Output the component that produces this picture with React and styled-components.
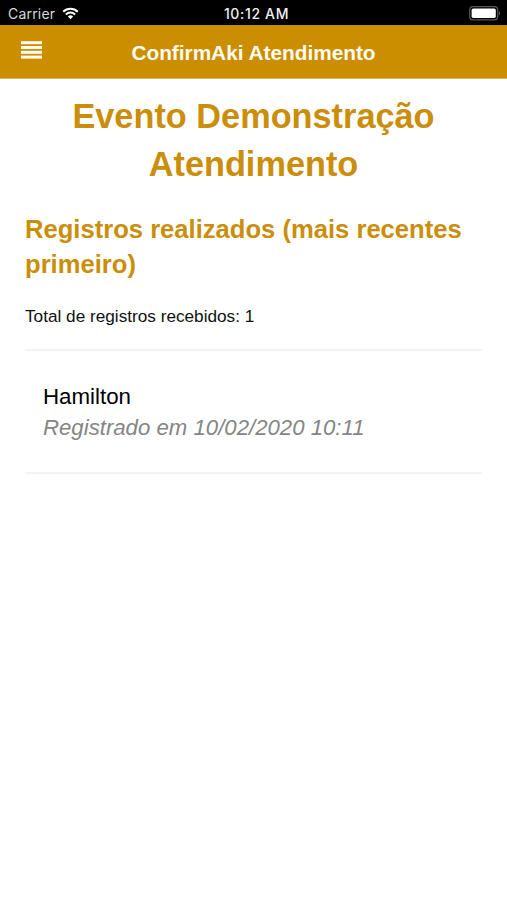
import React from "react";
import styled, { createGlobalStyle } from "styled-components";

const GlobalStyle = createGlobalStyle`
  * {
    box-sizing: border-box;
  }
  body {
    margin: 0;
    background-color: #ffffff;
    font-family: "Liberation Sans", Arial, sans-serif;
  }
`;

const registros = [{ nome: "Hamilton", data: "10/02/2020 10:11" }];

const WifiIcon = () => (
  <svg width="17" height="13" viewBox="0 0 18 14" fill="none">
    <path d="M1.2 5.1a11.2 11.2 0 0 1 15.6 0" stroke="#fff" strokeWidth="2.2" />
    <path d="M4 8a7.2 7.2 0 0 1 10 0" stroke="#fff" strokeWidth="2.1" />
    <path d="M9 13.2 6.2 10.3a4 4 0 0 1 5.6 0z" fill="#fff" />
  </svg>
);

const BatteryIcon = () => (
  <svg width="32" height="15" viewBox="0 0 32 15" fill="none">
    <rect x="0.7" y="0.7" width="28" height="13.2" rx="3.4" stroke="#58585a" strokeWidth="1.2" />
    <rect x="2.6" y="2.6" width="24.2" height="9.4" rx="1.7" fill="#fff" />
    <path d="M30 5.2c1.6.6 1.6 3.6 0 4.2z" fill="#58585a" />
  </svg>
);

const MenuIcon = () => (
  <svg width="21" height="18" viewBox="0 0 21 18" fill="#fffaf0">
    <rect y="0.2" width="21" height="3" />
    <rect y="5" width="21" height="3" />
    <rect y="9.8" width="21" height="3" />
    <rect y="14.6" width="21" height="3" />
  </svg>
);

const App = () => {
  return (
    <Screen>
      <GlobalStyle />
      <StatusBar>
        <Carrier>
          Carrier
          <WifiIcon />
        </Carrier>
        <Clock>10:12 AM</Clock>
        <Battery>
          <BatteryIcon />
        </Battery>
      </StatusBar>
      <Header>
        <MenuButton aria-label="Menu">
          <MenuIcon />
        </MenuButton>
        <HeaderTitle>ConfirmAki Atendimento</HeaderTitle>
      </Header>
      <Content>
        <EventTitle>Evento Demonstração Atendimento</EventTitle>
        <Subtitle>Registros realizados (mais recentes primeiro)</Subtitle>
        <Total>Total de registros recebidos: {registros.length}</Total>
        <List>
          {registros.map((registro) => (
            <Item key={registro.data}>
              <Name>{registro.nome}</Name>
              <Date>Registrado em {registro.data}</Date>
            </Item>
          ))}
        </List>
      </Content>
    </Screen>
  );
};

const Screen = styled.div`
  width: 100%;
  min-height: 900px;
  background-color: #ffffff;
`;

const StatusBar = styled.div`
  height: 25px;
  padding: 2px 6px 0 8px;
  display: grid;
  grid-template-columns: 1fr auto 1fr;
  align-items: center;
  background-color: #000000;
  color: #ffffff;
  font-family: Inter, sans-serif;
  font-size: 14px;
  line-height: 23px;
`;

const Carrier = styled.div`
  display: flex;
  align-items: center;
  gap: 7px;
  color: #d8d8d8;
  letter-spacing: 0.2px;

  svg {
    margin-bottom: 1px;
  }
`;

const Clock = styled.div`
  padding-left: 4px;
  font-weight: 500;
  letter-spacing: 0.65px;
  color: #f0f0f0;
`;

const Battery = styled.div`
  display: flex;
  justify-content: flex-end;
  padding-bottom: 1px;
`;

const Header = styled.header`
  height: 54px;
  padding: 0 20px;
  display: grid;
  grid-template-columns: 22px 1fr 22px;
  align-items: center;
  background-color: #cb8e00;
  border-bottom: 1px solid #dcb452;
`;

const MenuButton = styled.button`
  display: flex;
  margin: 0 0 4px;
  padding: 0 0 0 1px;
  border: 0;
  background: none;
`;

const HeaderTitle = styled.div`
  padding-top: 3px;
  color: #fffaf0;
  font-size: 20.8px;
  font-weight: bold;
  text-align: center;
`;

const Content = styled.main`
  padding: 13px 25px 0;
`;

const EventTitle = styled.h1`
  margin: 0;
  color: #cb8e0b;
  font-size: 34.3px;
  line-height: 48px;
  text-align: center;
`;

const Subtitle = styled.h2`
  margin: 24px 0 0;
  color: #cb8e0b;
  font-size: 25.6px;
  line-height: 35px;
`;

const Total = styled.p`
  margin: 22px 0 0;
  color: #111111;
  font-size: 17.2px;
  line-height: 24px;
`;

const List = styled.ul`
  margin: 21px 0 0;
  padding: 0;
  list-style: none;
  border-top: 2px solid #f4f4f4;
`;

const Item = styled.li`
  height: 123px;
  padding: 31px 18px 0;
  border-bottom: 2px solid #f4f4f4;
  font-size: 22.3px;
  line-height: 30px;
`;

const Name = styled.div`
  color: #000000;
`;

const Date = styled.div`
  padding-top: 1px;
  color: #858585;
  font-size: 22.2px;
  font-style: italic;
`;

export default App;
